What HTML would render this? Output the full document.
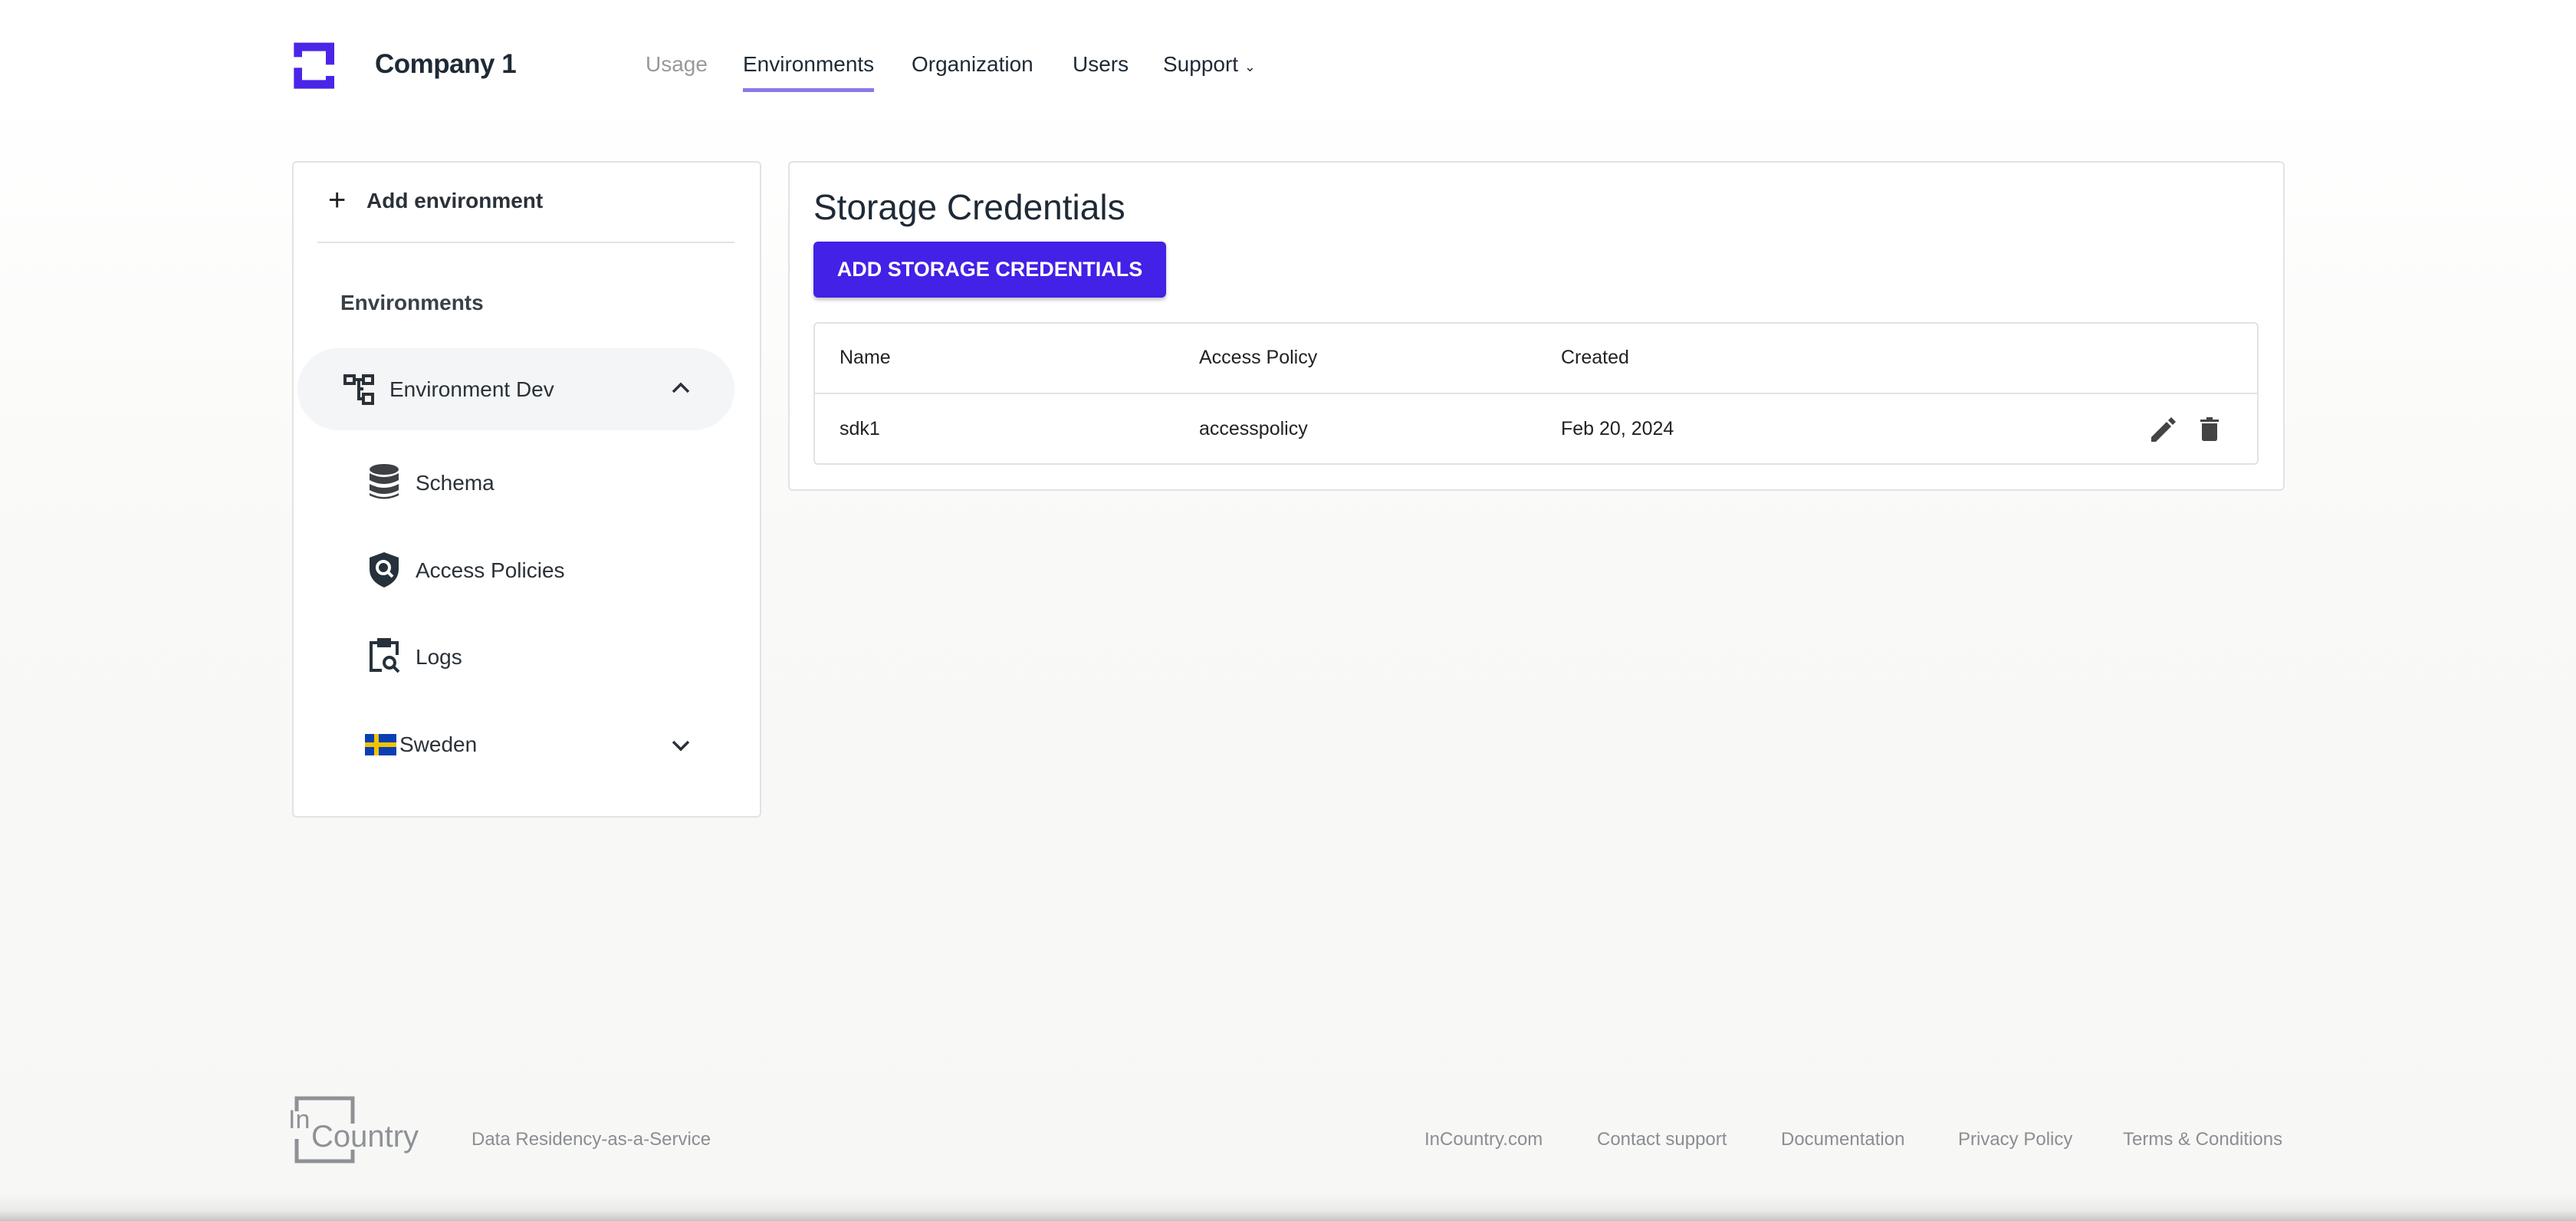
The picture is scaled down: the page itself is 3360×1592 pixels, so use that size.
<!DOCTYPE html>
<html><head><meta charset="utf-8"><style>
*{margin:0;padding:0;box-sizing:border-box}
body{width:3360px;height:1592px;overflow:hidden;font-family:"Liberation Sans",sans-serif;color:#1e2a36;background:linear-gradient(#fff 0,#fff 120px,#f9f9f7 700px,#f7f7f5 1555px,#ebebe9 1578px,#c4c4c4 1592px);position:relative}
.a{position:absolute;white-space:nowrap}
.card{position:absolute;background:#fff;border:2px solid #e3e3e3;border-radius:6px}
.nav{font-size:28px;top:68px}
.side{font-size:28px;color:#2a3138}
.th{font-size:25px;color:#222}
.ft{font-size:24px;color:#8a8e92;top:1472px}
</style></head><body>
<svg class="a" style="left:370px;top:45px" width="80" height="80" viewBox="0 0 240 240"><path d="M40 32H198V118H165V65H72V88H40Z" fill="#4a25e8"/><path d="M40 130H72V178H165V162H198V212H40Z" fill="#4a25e8"/></svg>
<div class="a" style="left:489px;top:64px;font-size:35px;font-weight:bold;color:#1e2a36;letter-spacing:-0.5px">Company 1</div>
<div class="a nav" style="left:842px;color:#999">Usage</div>
<div class="a nav" style="left:969px">Environments</div>
<div class="a" style="left:969px;top:115px;width:171px;height:5px;background:#8a78e6"></div>
<div class="a nav" style="left:1189px">Organization</div>
<div class="a nav" style="left:1399px">Users</div>
<div class="a nav" style="left:1517px">Support <span style="font-size:18px">⌄</span></div>

<div class="card" style="left:381px;top:210px;width:612px;height:856px"></div>
<div class="a" style="left:428px;top:243px;font-size:40px;line-height:36px;color:#222">+</div>
<div class="a side" style="left:478px;top:246px;font-weight:bold">Add environment</div>
<div class="a" style="left:414px;top:315px;width:544px;height:2px;background:#e3e3e3"></div>
<div class="a side" style="left:444px;top:379px;font-weight:bold;color:#3a4046">Environments</div>
<div class="a" style="left:388px;top:454px;width:570px;height:107px;border-radius:54px;background:#f3f5f6"></div>
<svg class="a" style="left:448px;top:488px" width="40" height="40" viewBox="0 0 40 40" fill="none" stroke="#2a3138" stroke-width="4"><rect x="2" y="2" width="12" height="10"/><rect x="26" y="2" width="12" height="10"/><rect x="26" y="26" width="12" height="12"/><path d="M14 7H26M20 7V32H26M20 19H26"/></svg>
<div class="a side" style="left:508px;top:492px">Environment Dev</div>
<svg class="a" style="left:876px;top:498px" width="24" height="16" viewBox="0 0 24 16" fill="none" stroke="#2a3138" stroke-width="3.5"><path d="M2 13L12 3L22 13"/></svg>
<svg class="a" style="left:482px;top:605px" width="38" height="48" viewBox="0 0 38 48" fill="#3d4145"><ellipse cx="19" cy="7" rx="19" ry="7"/><path d="M0 12Q19 22 38 12V21Q19 31 0 21Z"/><path d="M0 26Q19 36 38 26V34Q19 44 0 34Z"/><path d="M0 38Q19 48 38 38V41Q19 50 0 41Z"/></svg>
<div class="a side" style="left:542px;top:614px">Schema</div>
<svg class="a" style="left:482px;top:720px" width="38" height="46" viewBox="0 0 38 46"><path d="M19 0L38 7V22Q38 38 19 46Q0 38 0 22V7Z" fill="#26313b"/><circle cx="18" cy="20" r="8" fill="none" stroke="#fff" stroke-width="4"/><path d="M23 25L30 32" stroke="#fff" stroke-width="4"/></svg>
<div class="a side" style="left:542px;top:728px">Access Policies</div>
<svg class="a" style="left:482px;top:832px" width="42" height="46" viewBox="0 0 42 46" fill="none" stroke="#26313b" stroke-width="4"><path d="M12 6H2V42H16M26 6H36V22"/><rect x="12" y="2" width="14" height="8" fill="#26313b"/><circle cx="26" cy="32" r="7"/><path d="M31 37L38 44"/></svg>
<div class="a side" style="left:542px;top:841px">Logs</div>
<svg class="a" style="left:476px;top:957px" width="41" height="28" viewBox="0 0 41 28"><rect width="41" height="28" fill="#0a3fb3"/><rect x="12" width="6" height="28" fill="#f2c400"/><rect y="11" width="41" height="6" fill="#f2c400"/></svg>
<div class="a side" style="left:521px;top:955px">Sweden</div>
<svg class="a" style="left:876px;top:964px" width="24" height="16" viewBox="0 0 24 16" fill="none" stroke="#2a3138" stroke-width="3.5"><path d="M2 3L12 13L22 3"/></svg>

<div class="card" style="left:1028px;top:210px;width:1952px;height:430px"></div>
<div class="a" style="left:1061px;top:243px;font-size:46px;color:#1e2a36">Storage Credentials</div>
<div class="a" style="left:1061px;top:315px;width:460px;height:73px;background:#4321e6;border-radius:6px;box-shadow:0 3px 5px rgba(0,0,0,.25);color:#fff;font-weight:bold;font-size:27px;text-align:center;line-height:73px">ADD STORAGE CREDENTIALS</div>
<div class="a" style="left:1061px;top:420px;width:1885px;height:186px;border:2px solid #e2e2e2;border-radius:6px"></div>
<div class="a" style="left:1062px;top:512px;width:1883px;height:2px;background:#e2e2e2"></div>
<div class="a th" style="left:1095px;top:452px">Name</div>
<div class="a th" style="left:1564px;top:452px">Access Policy</div>
<div class="a th" style="left:2036px;top:452px">Created</div>
<div class="a th" style="left:1095px;top:545px">sdk1</div>
<div class="a th" style="left:1564px;top:545px">accesspolicy</div>
<div class="a th" style="left:2036px;top:545px">Feb 20, 2024</div>
<svg class="a" style="left:2806px;top:544px" width="32" height="32" viewBox="0 0 32 32" fill="#444"><path d="M0 32V26L20 6L26 12L6 32Z"/><path d="M22 4L26 0L32 6L28 10Z"/></svg>
<svg class="a" style="left:2870px;top:544px" width="26" height="32" viewBox="0 0 26 32" fill="#444"><rect x="0" y="3" width="24" height="3"/><rect x="8" y="0" width="8" height="4"/><path d="M2 8H22V28Q22 31 19 31H5Q2 31 2 28Z"/></svg>

<svg class="a" style="left:376px;top:1429px" width="170" height="88" viewBox="0 0 170 88"><path d="M11 20V3H84V36M11 56V85H84V70" fill="none" stroke="#8e9297" stroke-width="5"/><text x="0" y="42" font-family="Liberation Sans" font-size="34" fill="#8e9297">In</text><text x="30" y="66" font-family="Liberation Sans" font-size="40" fill="#8e9297">Country</text></svg>
<div class="a ft" style="left:615px">Data Residency-as-a-Service</div>
<div class="a ft" style="left:1858px">InCountry.com</div>
<div class="a ft" style="left:2083px">Contact support</div>
<div class="a ft" style="left:2323px">Documentation</div>
<div class="a ft" style="left:2554px">Privacy Policy</div>
<div class="a ft" style="left:2769px">Terms &amp; Conditions</div>
</body></html>
